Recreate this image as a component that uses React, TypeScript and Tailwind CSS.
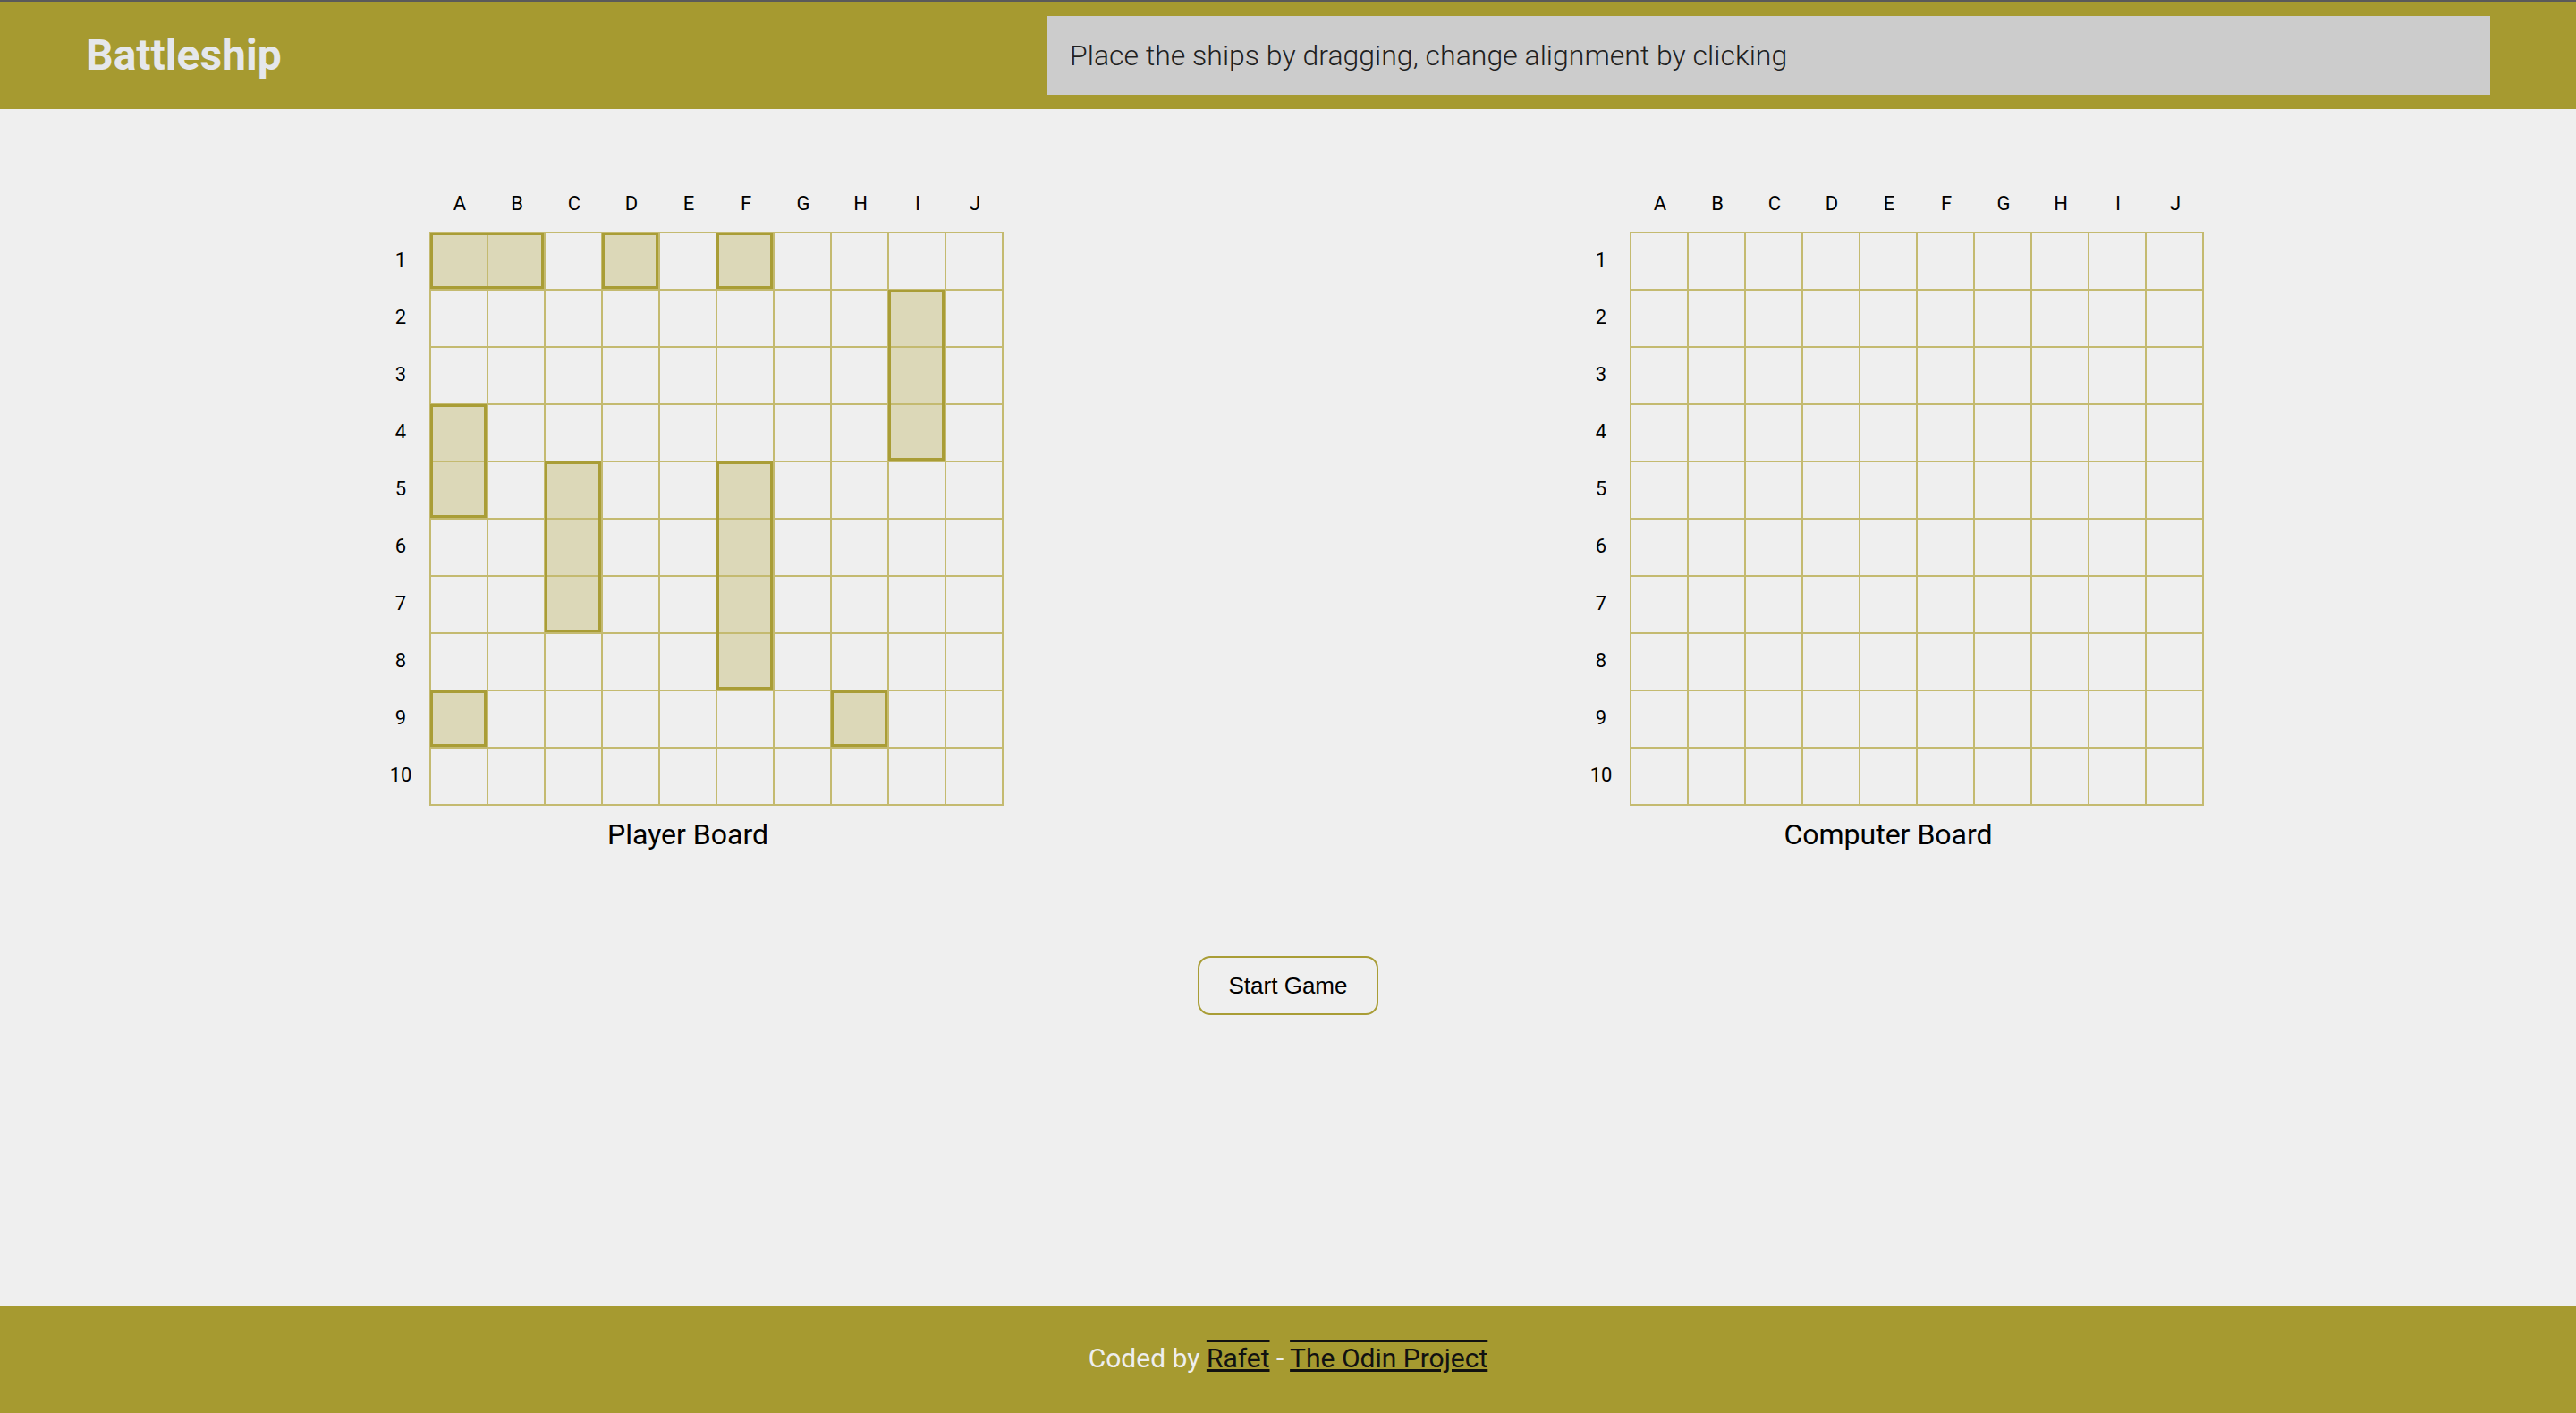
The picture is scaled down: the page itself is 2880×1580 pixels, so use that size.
const COLS = ['A', 'B', 'C', 'D', 'E', 'F', 'G', 'H', 'I', 'J'];
const ROWS = [1, 2, 3, 4, 5, 6, 7, 8, 9, 10];

type Ship = { col: number; row: number; len: number; vertical: boolean };

const playerShips: Ship[] = [
  { col: 0, row: 0, len: 2, vertical: false },
  { col: 3, row: 0, len: 1, vertical: false },
  { col: 5, row: 0, len: 1, vertical: false },
  { col: 8, row: 1, len: 3, vertical: true },
  { col: 0, row: 3, len: 2, vertical: true },
  { col: 2, row: 4, len: 3, vertical: true },
  { col: 5, row: 4, len: 4, vertical: true },
  { col: 0, row: 8, len: 1, vertical: false },
  { col: 7, row: 8, len: 1, vertical: false },
];

function occupied(ships: Ship[], col: number, row: number) {
  return ships.some((s) =>
    s.vertical
      ? s.col === col && row >= s.row && row < s.row + s.len
      : s.row === row && col >= s.col && col < s.col + s.len
  );
}

function Board({ title, ships }: { title: string; ships: Ship[] }) {
  return (
    <div className="flex flex-col items-center">
      <div className="flex">
        <div className="w-[66px] h-16" />
        {COLS.map((c) => (
          <div key={c} className="w-16 h-16 flex items-center justify-center text-[22px] text-black">
            {c}
          </div>
        ))}
      </div>

      <div className="flex">
        <div className="flex flex-col w-16 -mt-px">
          {ROWS.map((r) => (
            <div key={r} className="h-16 flex items-center justify-center text-[22px] text-black">
              {r}
            </div>
          ))}
        </div>

        <div className="relative grid grid-cols-10 border-l-2 border-t-2 border-[#c4ba70]">
          {ROWS.map((r, ri) =>
            COLS.map((c, ci) => (
              <div
                key={c + r}
                className={
                  occupied(ships, ci, ri)
                    ? 'w-16 h-16 border-r-2 border-b-2 border-[#c4ba70] bg-[#dcd8b8]'
                    : 'w-16 h-16 border-r-2 border-b-2 border-[#c4ba70]'
                }
              />
            ))
          )}

          {ships.map((s, i) => (
            <div
              key={i}
              className="absolute border-[3px] border-[#a99d36]"
              style={{
                left: s.col * 64 - 1,
                top: s.row * 64 - 1,
                width: (s.vertical ? 1 : s.len) * 64 - 1,
                height: (s.vertical ? s.len : 1) * 64 - 1,
              }}
            />
          ))}
        </div>
      </div>

      <div className="mt-[16px] text-[32px] leading-8 text-black">{title}</div>
    </div>
  );
}

export default function App() {
  return (
    <div className="min-h-screen flex flex-col bg-[#efefef] font-[Roboto,sans-serif]">
      <header className="h-[122px] border-t-2 border-[#5a5a5a] bg-[#a69a30] flex items-center justify-between pl-[96px] pr-[96px]">
        <h1 className="text-[48px] font-bold text-[#e5e7eb]">Battleship</h1>
        <div className="w-[1613px] h-[88px] bg-[#cccccc] flex items-center pl-[25px] text-[32px] font-light text-[#1f1f1f]">
          Place the ships by dragging, change alignment by clicking
        </div>
      </header>

      <main className="flex-1 flex flex-col items-center pt-[73px]">
        <div className="w-[2048px] flex justify-between">
          <Board title="Player Board" ships={playerShips} />
          <Board title="Computer Board" ships={[]} />
        </div>

        <button className="mt-[120px] px-[33px] py-4 border-2 border-[#a99d36] rounded-[14px] bg-[#efefef] text-[26px] leading-[30px] text-black font-['Liberation_Sans',Arial,sans-serif]">
          Start Game
        </button>
      </main>

      <footer className="h-[120px] bg-[#a69a30] flex items-center justify-center pb-1 text-[30px] text-[#eeeeee]">
        <span>
          Coded by{' '}
          <a href="#" className="text-[#111111] [text-decoration-line:underline_overline] decoration-3">
            Rafet
          </a>{' '}
          -{' '}
          <a href="#" className="text-[#111111] [text-decoration-line:underline_overline] decoration-3">
            The Odin Project
          </a>
        </span>
      </footer>
    </div>
  );
}
